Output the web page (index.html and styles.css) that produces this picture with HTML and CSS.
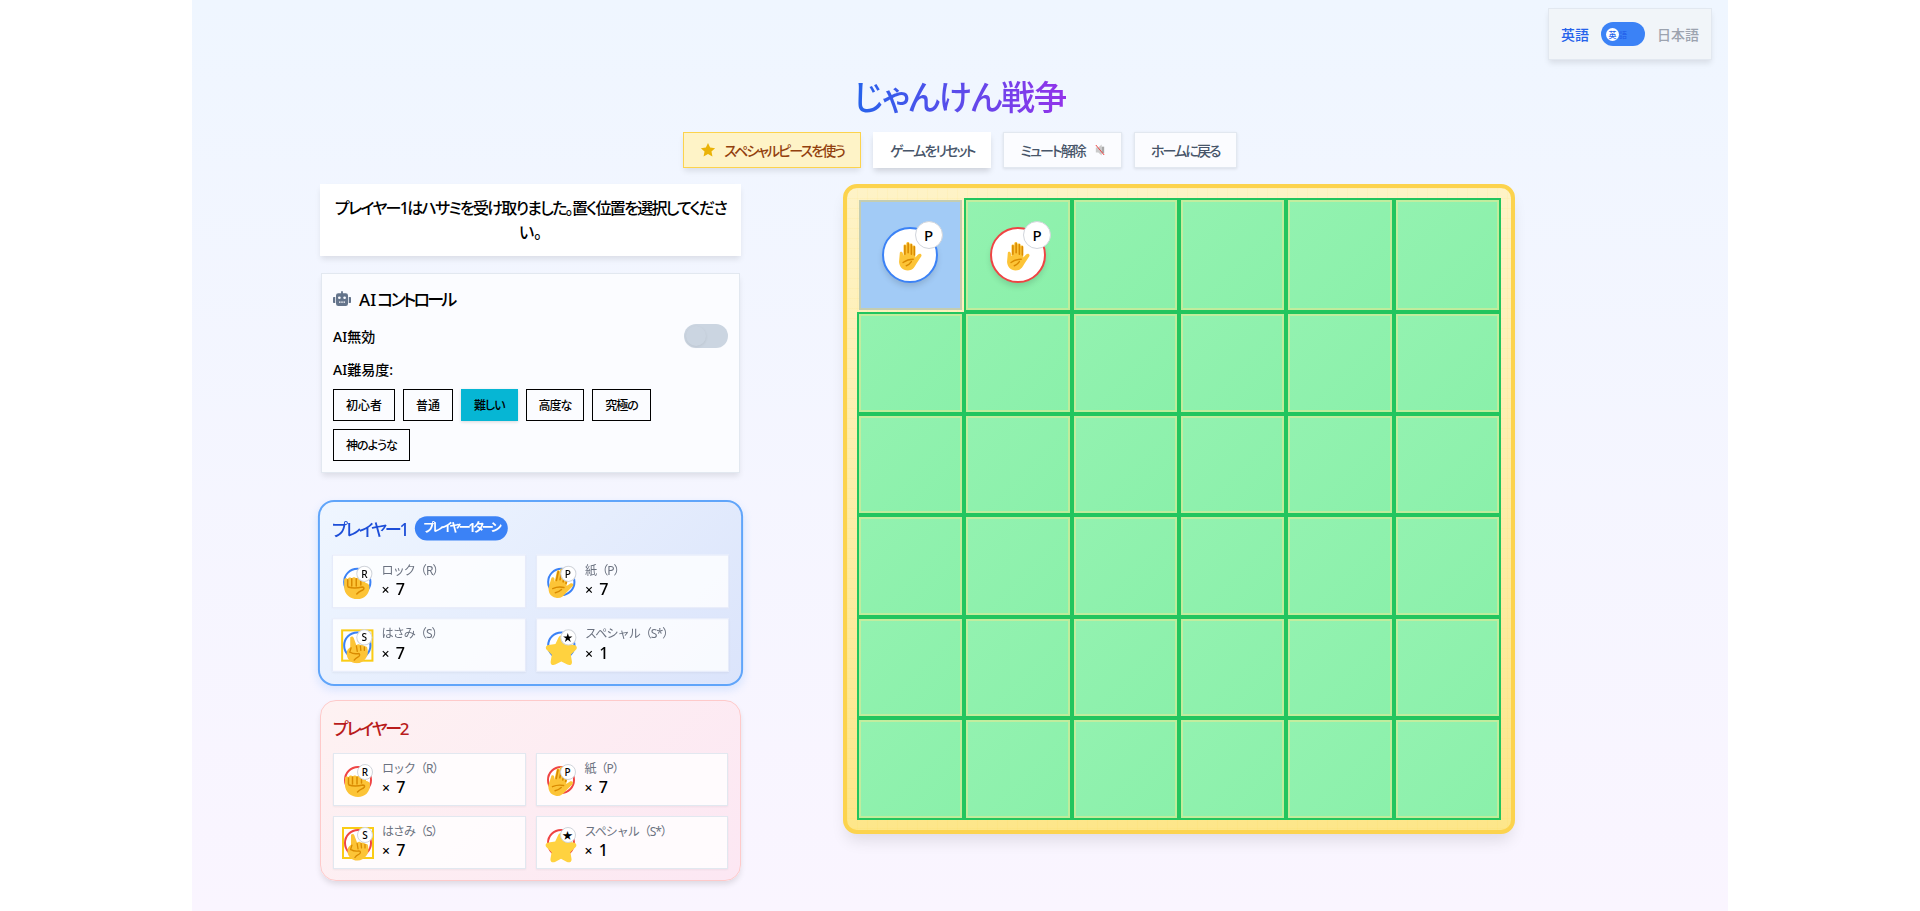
FILE: index.html
```html
<!DOCTYPE html>
<html lang="ja">
<head>
    <meta charset="UTF-8">
    <meta name="viewport" content="width=device-width, initial-scale=1.0">
    <title>じゃんけん戦争</title>
    <link rel="stylesheet" href="styles.css">
</head>
<body>
    <svg class="defs" width="0" height="0">
        <symbol id="hand-open" viewBox="0 0 28 34">
            <path fill="#fcc437" d="M3 14c0-1.8 2.7-2 3.2-.2L7 17V6c0-2 3-2 3 0V3.5c0-2.2 3.5-2.2 3.5 0V5c0-2 3.2-2 3.2 0v2c0-1.8 3-1.8 3 0v11.500l3-3c2-2 4.800 0 3.300 2l-5.300 8c-2 4-4.500 7-9 7-6 0-9-4-9.500-9z"/>
            <path fill="none" stroke="#d98a00" stroke-width="1.700" stroke-linecap="round" d="M8.500 6v9M12 3.500v10M15.500 5v10M18.700 7v9"/>
            <path fill="none" stroke="#d98a00" stroke-width="1.500" stroke-linecap="round" d="M6.500 24c3.500-2.500 7-3.500 11-3.500M10 27.500c2-.8 4-2.300 5.500-4.500"/>
        </symbol>
        <symbol id="hand-fist" viewBox="0 0 28 28">
            <path fill="#fcc437" d="M1 8c0-2 3-2 3.500-.5C5 5 8 5 8.500 7c.5-2 4-2 4.500 0 .5-2 4-2 4.500 0 1-2 4.500-1.500 4.500 1v3c2 0 4 1 4 4 0 7-5 12-12 12S1 22 1 15z"/>
            <path fill="none" stroke="#d98a00" stroke-width="1.500" stroke-linecap="round" d="M4.500 8v6M8.500 7v7M13 7v7M17.500 7v6M5 15c4 1.500 8 1.500 14 0 2 0 2 2 .5 3-2 1-4 1.500-6 4"/>
        </symbol>
        <symbol id="hand-point" viewBox="0 0 28 32">
            <path fill="#fcc437" d="M6 2c1.500-1.500 3.500-1 4 1l3 8c1-1.500 4-1.500 4.500.5 1-1.500 4-1 4.500 1 1.500-.5 3.500.5 3.500 2.500 1 4 .5 8-2 11-2.500 3.500-6 5.500-10 5.500-7 0-11.500-5-11.500-11 0-3 1.500-5.500 4-7z"/>
            <path fill="none" stroke="#d98a00" stroke-width="1.500" stroke-linecap="round" d="M7 14l-1.500 5M13 12l1 6M17.500 12l.5 5M22 13v4M6 19c3 2 6 2 9 1.500 2.500 0 2 2.500 .5 3.500-2 1-4 2-5 4"/>
        </symbol>
        <symbol id="star-big" viewBox="0 0 32 32">
            <path fill="#ffd23f" d="M16 2c1.500 0 2.300 1 3 2.500l2.800 6 6.700 1c3 .5 3.800 3 1.700 5l-4.800 4.700 1.100 6.500c.5 3-2 4.500-4.500 3.200L16 27.700l-6 3.200c-2.500 1.300-5-.2-4.500-3.200l1.100-6.500-4.800-4.700c-2.100-2-1.300-4.500 1.700-5l6.700-1 2.800-6C13.700 3 14.500 2 16 2z"/>
        </symbol>
    </svg>

    <div class="page">
        <div class="lang-switch">
            <span class="lang-on">英語</span>
            <span class="lang-toggle"><span class="lang-knob">英</span><span class="lang-ghost">語</span></span>
            <span class="lang-off">日本語</span>
        </div>

        <h1 class="title">じゃんけん戦争</h1>

        <div class="actions">
            <button class="btn btn-special">
                <svg class="btn-star" viewBox="0 0 24 24"><path fill="#eab308" d="M12 1.500l3.200 6.900 7.500.9-5.500 5.100 1.500 7.400-6.700-3.700-6.700 3.700 1.500-7.400-5.500-5.100 7.500-.9z"/></svg>
                スペシャルピースを使う
            </button>
            <button class="btn btn-plain">ゲームをリセット</button>
            <button class="btn btn-soft">
                ミュート解除
                <svg class="btn-mute" viewBox="0 0 12 14"><path fill="#cbcbcb" d="M1 4h3l4-3.500v13L4 10H1z"/><path fill="#a8a8a8" d="M8 3h3v8H8z"/><path stroke="#ef4444" stroke-width="1.200" d="M1 1l10 12"/></svg>
            </button>
            <button class="btn btn-soft">ホームに戻る</button>
        </div>

        <div class="game">
            <div class="side">
                <div class="message">プレイヤー1はハサミを受け取りました。置く位置を選択してくださ<br><span class="message-end">い。</span></div>

                <div class="ai-card">
                    <h3 class="ai-title">
                        <svg class="robot" viewBox="0 0 24 20"><path fill="#64748b" d="M12 0a1.200 1.200 0 0 1 1.200 1.200V3H17a3 3 0 0 1 3 3v11a3 3 0 0 1-3 3H7a3 3 0 0 1-3-3V6a3 3 0 0 1 3-3h3.800V1.200A1.200 1.200 0 0 1 12 0zM0 9a1 1 0 0 1 1-1h2v8H1a1 1 0 0 1-1-1zm24 0v6a1 1 0 0 1-1 1h-2V8h2a1 1 0 0 1 1 1z"/><circle cx="8.500" cy="9" r="1.800" fill="#fbfcff"/><circle cx="15.500" cy="9" r="1.800" fill="#fbfcff"/><path fill="#fbfcff" d="M8 14h2v1.500H8zM11 14h2v1.500h-2zM14 14h2v1.500h-2z"/></svg>
                        <span>AI<span class="ai-kana">コントロール</span></span>
                    </h3>
                    <div class="ai-row">
                        <span>AI無効</span>
                        <span class="ai-toggle"><span class="ai-knob"></span></span>
                    </div>
                    <div class="ai-label">AI難易度:</div>
                    <div class="levels">
                        <button class="level">初心者</button>
                        <button class="level">普通</button>
                        <button class="level level-active level-tight">難しい</button>
                        <button class="level level-tight">高度な</button>
                        <button class="level level-tight">究極の</button>
                        <button class="level level-tight">神のような</button>
                    </div>
                </div>

                <div class="player player-one">
                    <div class="player-head">
                        <h2 class="player-name">プレイヤー1</h2>
                        <span class="turn-pill">プレイヤー1ターン</span>
                    </div>
                    <div class="stock">
                        <div class="item">
                            <div class="mini"><span class="ring"></span><svg class="art"><use href="#hand-fist"/></svg><span class="tag">R</span></div>
                            <div><div class="item-label">ロック（R）</div><div class="item-count"><span class="times">×</span> 7</div></div>
                        </div>
                        <div class="item">
                            <div class="mini"><span class="ring"></span><svg class="art art-tilt"><use href="#hand-open"/></svg><span class="tag">P</span></div>
                            <div><div class="item-label">紙（P）</div><div class="item-count"><span class="times">×</span> 7</div></div>
                        </div>
                        <div class="item">
                            <div class="mini mini-picked"><span class="ring"></span><svg class="art"><use href="#hand-point"/></svg><span class="tag">S</span></div>
                            <div><div class="item-label">はさみ（S）</div><div class="item-count"><span class="times">×</span> 7</div></div>
                        </div>
                        <div class="item">
                            <div class="mini"><span class="ring"></span><svg class="art art-star"><use href="#star-big"/></svg><span class="tag">★</span></div>
                            <div><div class="item-label">スペシャル（S*）</div><div class="item-count"><span class="times">×</span> 1</div></div>
                        </div>
                    </div>
                </div>

                <div class="player player-two">
                    <div class="player-head">
                        <h2 class="player-name">プレイヤー2</h2>
                    </div>
                    <div class="stock">
                        <div class="item">
                            <div class="mini"><span class="ring"></span><svg class="art"><use href="#hand-fist"/></svg><span class="tag">R</span></div>
                            <div><div class="item-label">ロック（R）</div><div class="item-count"><span class="times">×</span> 7</div></div>
                        </div>
                        <div class="item">
                            <div class="mini"><span class="ring"></span><svg class="art art-tilt"><use href="#hand-open"/></svg><span class="tag">P</span></div>
                            <div><div class="item-label">紙（P）</div><div class="item-count"><span class="times">×</span> 7</div></div>
                        </div>
                        <div class="item">
                            <div class="mini mini-picked"><span class="ring"></span><svg class="art"><use href="#hand-point"/></svg><span class="tag">S</span></div>
                            <div><div class="item-label">はさみ（S）</div><div class="item-count"><span class="times">×</span> 7</div></div>
                        </div>
                        <div class="item">
                            <div class="mini"><span class="ring"></span><svg class="art art-star"><use href="#star-big"/></svg><span class="tag">★</span></div>
                            <div><div class="item-label">スペシャル（S*）</div><div class="item-count"><span class="times">×</span> 1</div></div>
                        </div>
                    </div>
                </div>
            </div>

            <div class="board">
                <div class="grid">
                    <div class="cell cell-picked">
                        <div class="piece piece-blue"><svg class="piece-art"><use href="#hand-open"/></svg><span class="piece-tag">P</span></div>
                    </div>
                    <div class="cell">
                        <div class="piece piece-red"><svg class="piece-art"><use href="#hand-open"/></svg><span class="piece-tag">P</span></div>
                    </div>
                    <div class="cell"></div><div class="cell"></div><div class="cell"></div><div class="cell"></div>
                    <div class="cell"></div><div class="cell"></div><div class="cell"></div><div class="cell"></div><div class="cell"></div><div class="cell"></div>
                    <div class="cell"></div><div class="cell"></div><div class="cell"></div><div class="cell"></div><div class="cell"></div><div class="cell"></div>
                    <div class="cell"></div><div class="cell"></div><div class="cell"></div><div class="cell"></div><div class="cell"></div><div class="cell"></div>
                    <div class="cell"></div><div class="cell"></div><div class="cell"></div><div class="cell"></div><div class="cell"></div><div class="cell"></div>
                    <div class="cell"></div><div class="cell"></div><div class="cell"></div><div class="cell"></div><div class="cell"></div><div class="cell"></div>
                </div>
            </div>
        </div>
    </div>
</body>
</html>
```

FILE: styles.css
```css
* {
    box-sizing: border-box;
}
body {
    margin: 0;
    background-color: #fff;
    font-family: "Noto Sans", "Noto Sans CJK JP", sans-serif;
    font-feature-settings: "palt";
    color: #000;
}
.defs {
    position: absolute;
}
.page {
    position: relative;
    width: 1536px;
    height: 911px;
    margin: 0 auto;
    padding-top: 77px;
    overflow: hidden;
    background: linear-gradient(to bottom, #eff6ff, #faf5ff);
}

/* language switch */
.lang-switch {
    position: absolute;
    top: 8px;
    right: 16px;
    display: flex;
    align-items: center;
    gap: 12px;
    width: 164px;
    height: 52px;
    padding: 0 12px;
    font-size: 14px;
    font-weight: 500;
    background-color: #f1f5f9;
    border: 1px solid #e2e8f0;
    box-shadow: 0 4px 6px -1px rgba(0, 0, 0, 0.1);
}
.lang-on {
    color: #2563eb;
}
.lang-off {
    color: #9ca3af;
}
.lang-toggle {
    position: relative;
    width: 44px;
    height: 24px;
    border-radius: 12px;
    background-color: #3b82f6;
}
.lang-knob {
    position: absolute;
    top: 6px;
    left: 5px;
    width: 13px;
    height: 13px;
    border-radius: 50%;
    font-size: 8px;
    line-height: 13px;
    text-align: center;
    color: #2563eb;
    background-color: #fff;
}
.lang-ghost {
    position: absolute;
    top: 6px;
    left: 18px;
    font-size: 8px;
    line-height: 13px;
    color: #2563eb;
}

/* header */
.title {
    width: fit-content;
    margin: 0 auto 15px;
    font-size: 34px;
    line-height: 40px;
    font-weight: 500;
    letter-spacing: -1.3px;
    white-space: nowrap;
    color: transparent;
    background: linear-gradient(to right, #2563eb, #9333ea);
    background-clip: text;
    -webkit-background-clip: text;
}
.actions {
    display: flex;
    justify-content: center;
    gap: 12px;
    margin-bottom: 16px;
}
.btn {
    display: flex;
    align-items: center;
    height: 36px;
    padding: 0 16px;
    font: inherit;
    font-feature-settings: inherit;
    font-size: 14px;
    font-weight: 500;
    letter-spacing: -1.9px;
    white-space: nowrap;
    color: #475569;
    border: 1px solid transparent;
    box-shadow: 0 1px 3px rgba(0, 0, 0, 0.1);
}
.btn-special {
    color: #92400e;
    background-color: #fef3c7;
    border-color: #fcd34d;
    box-shadow: 0 4px 6px -1px rgba(0, 0, 0, 0.1);
}
.btn-star {
    width: 16px;
    height: 16px;
    margin-right: 8px;
}
.btn-plain {
    color: #475569;
    background-color: #fff;
    box-shadow: 0 4px 6px -1px rgba(0, 0, 0, 0.15);
}
.btn-soft {
    background-color: #fbfcff;
    border-color: #e2e8f0;
}
.btn-mute {
    width: 10px;
    height: 12px;
    margin-left: 10px;
}

/* main area */
.game {
    display: flex;
    align-items: flex-start;
    gap: 102px;
    padding-left: 128px;
}
.side {
    display: flex;
    flex-direction: column;
    width: 421px;
}
.message {
    height: 72px;
    padding: 12px 4px;
    margin-bottom: 17px;
    font-size: 16px;
    line-height: 24px;
    font-weight: 500;
    letter-spacing: -1.7px;
    text-align: center;
    white-space: nowrap;
    background-color: #fff;
    box-shadow: 0 4px 6px -1px rgba(0, 0, 0, 0.1);
}
.message-end {
    letter-spacing: 0;
}
.ai-card {
    width: 419px;
    height: 200px;
    margin: 0 1px 28px;
    padding: 10px 11px;
    background-color: #fbfcff;
    border: 1px solid #e2e8f0;
    box-shadow: 0 4px 6px -1px rgba(0, 0, 0, 0.1);
}
.ai-title {
    display: flex;
    align-items: center;
    gap: 8px;
    height: 28px;
    margin: 0 0 12px;
    font-size: 17px;
    font-weight: 500;
}
.ai-kana {
    margin-left: 1px;
    letter-spacing: -2.7px;
}
.robot {
    width: 18px;
    height: 15px;
}
.ai-row {
    display: flex;
    align-items: center;
    justify-content: space-between;
    height: 24px;
    margin-bottom: 12px;
    font-size: 14px;
    font-weight: 500;
}
.ai-toggle {
    position: relative;
    width: 44px;
    height: 24px;
    border-radius: 12px;
    background-color: #cbd5e1;
}
.ai-knob {
    position: absolute;
    top: 2px;
    left: 2px;
    width: 20px;
    height: 20px;
    border-radius: 50%;
    background-color: #cbd5e1;
    box-shadow: 0 1px 3px rgba(0, 0, 0, 0.08);
}
.ai-label {
    height: 20px;
    margin-bottom: 9px;
    font-size: 14px;
    line-height: 20px;
    font-weight: 500;
}
.levels {
    display: flex;
    flex-wrap: wrap;
    gap: 8px;
}
.level {
    height: 32px;
    padding: 0 12px;
    font: inherit;
    font-feature-settings: inherit;
    font-size: 12px;
    font-weight: 500;
    color: #000;
    background-color: transparent;
    border: 1px solid #000;
}
.level-tight {
    letter-spacing: -1px;
}
.level-active {
    background-color: #06b6d4;
    border-color: #06b6d4;
    box-shadow: 0 1px 3px rgba(0, 0, 0, 0.15);
}

/* players */
.player {
    padding: 12px;
    border-radius: 16px;
}
.player-one {
    height: 184px;
    margin-bottom: 15px;
    border: 2px solid #60a5fa;
    background: linear-gradient(135deg, #eff6ff, #dbe4fb);
    box-shadow: 0 4px 8px rgba(96, 165, 250, 0.2);
    transform: scale(1.01);
}
.player-two {
    height: 181px;
    border: 1px solid #fecaca;
    background: linear-gradient(135deg, #fef2f2, #fce7f3);
    box-shadow: 0 4px 6px -1px rgba(0, 0, 0, 0.12);
}
.player-head {
    display: flex;
    align-items: center;
    gap: 8px;
    height: 28px;
    margin-bottom: 12px;
}
.player-name {
    margin: 0;
    font-size: 17px;
    font-weight: 500;
    letter-spacing: -2.2px;
}
.player-one .player-name {
    color: #1d4ed8;
}
.player-two .player-name {
    color: #b91c1c;
}
.turn-pill {
    padding: 0 8px;
    font-size: 12px;
    line-height: 24px;
    font-weight: 700;
    letter-spacing: -2.2px;
    color: #fff;
    border-radius: 12px;
    background-color: #3b82f6;
}
.stock {
    display: grid;
    grid-template-columns: 1fr 1fr;
    gap: 10px;
}
.item {
    display: flex;
    align-items: center;
    gap: 8px;
    height: 53px;
    padding: 0 8px;
    background-color: rgba(255, 255, 255, 0.8);
    border: 1px solid #e2e8f0;
    box-shadow: 0 1px 2px rgba(0, 0, 0, 0.05);
}
.player-one .item {
    border-color: #e6ebfa;
}
.mini {
    position: relative;
    flex: none;
    width: 32px;
    height: 32px;
}
.mini-picked {
    outline: 2px solid #facc15;
    outline-offset: -2px;
}
.ring {
    position: absolute;
    top: 2px;
    left: 2px;
    width: 28px;
    height: 28px;
    border-radius: 50%;
    background-color: #fff;
    border: 2px solid #3b82f6;
}
.player-two .ring {
    border-color: #ef4444;
}
.art {
    position: absolute;
    top: 6px;
    left: 2px;
    width: 28px;
    height: 28px;
}
.art-tilt {
    top: 1px;
    left: 1px;
    width: 30px;
    height: 33px;
    transform: rotate(12deg);
}
.art-star {
    top: 4px;
    left: 0;
    width: 32px;
    height: 32px;
}
.tag {
    position: absolute;
    top: 0;
    right: 1px;
    width: 16px;
    height: 16px;
    font-size: 10px;
    font-weight: 500;
    line-height: 14px;
    text-align: center;
    background-color: #fff;
    border: 1px solid #d1d5db;
    border-radius: 50%;
}
.item-label {
    font-size: 12px;
    line-height: 16px;
    letter-spacing: -1px;
    color: #6b7280;
    font-feature-settings: "pkna";
}
.item-count {
    font-size: 16px;
    line-height: 20px;
    font-weight: 500;
    word-spacing: 2px;
}
.times {
    font-size: 14px;
}

/* board */
.board {
    width: 672px;
    height: 650px;
    padding: 10px;
    border: 4px solid #fcd34d;
    border-radius: 14px;
    background-color: #fef3c7;
    background-image:
        repeating-linear-gradient(to right, rgba(250, 204, 21, 0.06) 0 1px, transparent 1px 10px),
        repeating-linear-gradient(to bottom, rgba(250, 204, 21, 0.06) 0 1px, transparent 1px 10px),
        linear-gradient(to bottom, #fef3c7, #fde68a);
    box-shadow: 0 10px 15px -3px rgba(0, 0, 0, 0.1);
}
.grid {
    display: grid;
    grid-template-columns: repeat(6, 1fr);
    grid-template-rows: 114px repeat(5, 1fr);
    height: 622px;
}
.cell {
    display: flex;
    align-items: center;
    justify-content: center;
    border: 2px solid #22c55e;
    background: linear-gradient(135deg, #93f2b0, #8af0aa);
    box-shadow: inset 0 0 0 2px rgba(253, 230, 138, 0.45);
}
.cell-picked {
    border-color: transparent;
    background: #a2cbf6;
    background-clip: padding-box;
    box-shadow: inset 0 0 0 2px rgba(200, 205, 170, 0.9);
}
.cell-picked .piece {
    margin-right: 2px;
}
.piece {
    position: relative;
    width: 56px;
    height: 56px;
    background-color: #fff;
    border: 2px solid;
    border-radius: 50%;
    box-shadow: 0 4px 6px -1px rgba(0, 0, 0, 0.15);
}
.piece-blue {
    border-color: #3b82f6;
}
.piece-red {
    border-color: #ef4444;
}
.piece-art {
    position: absolute;
    top: 11px;
    left: 13px;
    width: 26px;
    height: 32px;
}
.piece-tag {
    position: absolute;
    top: -8px;
    right: -7px;
    width: 28px;
    height: 28px;
    font-size: 15px;
    font-weight: 500;
    line-height: 26px;
    text-align: center;
    background-color: #fff;
    border: 1px solid #d1d5db;
    border-radius: 50%;
}
```
